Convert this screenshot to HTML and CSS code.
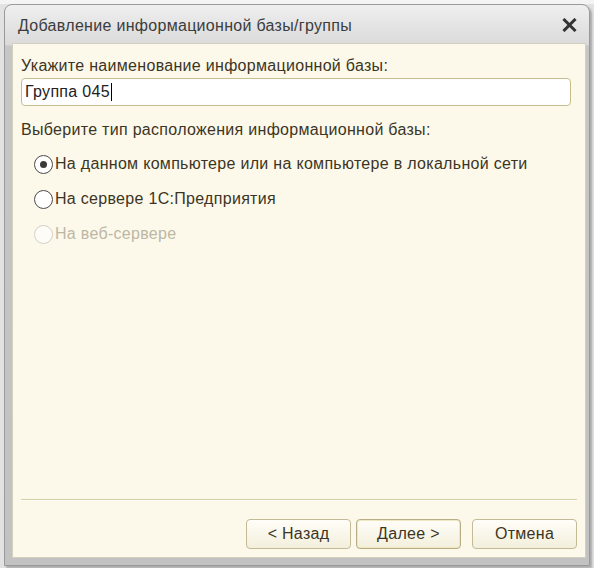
FILE: index.html
```html
<!DOCTYPE html>
<html lang="ru">
<head>
<meta charset="utf-8">
<title>Добавление информационной базы/группы</title>
<link rel="stylesheet" href="styles.css">
</head>
<body>
<div class="desk">
  <div class="window">
    <div class="titlebar">
      <span class="title">Добавление информационной базы/группы</span>
      <svg class="close" width="15" height="14" viewBox="0 0 15 14"><path d="M2.5 2 L12.5 12 M12.5 2 L2.5 12" stroke="#333" stroke-width="3" stroke-linecap="square"/></svg>
    </div>
    <div class="content">
      <div class="label first">Укажите наименование информационной базы:</div>
      <div class="input"><span>Группа 045</span><span class="caret"></span></div>
      <div class="label second">Выберите тип расположения информационной базы:</div>
      <div class="radios">
        <div class="radio checked"><span class="circle"><span class="dot"></span></span><span>На данном компьютере или на компьютере в локальной сети</span></div>
        <div class="radio"><span class="circle"></span><span>На сервере 1С:Предприятия</span></div>
        <div class="radio disabled"><span class="circle"></span><span>На веб-сервере</span></div>
      </div>
      <div class="spacer"></div>
      <div class="sep"></div>
      <div class="buttons">
        <button class="btn">&lt; Назад</button>
        <button class="btn default">Далее &gt;</button>
        <button class="btn cancel">Отмена</button>
      </div>
    </div>
  </div>
</div>
</body>
</html>
```
FILE: styles.css
```css
* { box-sizing: border-box; }
html, body { margin: 0; padding: 0; }
body {
  width: 594px;
  height: 568px;
  overflow: hidden;
  background: #dcdcdc;
  font-family: "Liberation Sans", Arial, sans-serif;
  font-size: 16px;
  letter-spacing: 0.3px;
  color: #3d3524;
}
.desk {
  padding: 4px 0 0 4px;
  height: 568px;
  background: linear-gradient(to bottom, #f4f4f4 0, #f4f4f4 4px, #e2e2e2 4px);
}
.window {
  width: 586px;
  height: 562px;
  border-radius: 8px 8px 0 0;
  background: linear-gradient(to bottom, #efefef 0, #dadada 40px, #c6c6c6 41px, #c2c2c2 100%);
  border: 1px solid #9a9a9a;
  padding: 0 3px 7px 7px;
  display: flex;
  flex-direction: column;
  box-shadow: 2px 2px 2px rgba(0,0,0,0.25);
}
.titlebar {
  height: 38px;
  display: flex;
  align-items: center;
  justify-content: space-between;
  padding: 3px 6px 0 6px;
}
.title {
  color: #3c3c3c;
}
.close { margin-right: 3px; margin-top: -2px; }
.content {
  flex: 1;
  background: #fcf9eb;
  border: 1px solid #d4d0c0;
  padding: 0 8px 8px 8px;
  display: flex;
  flex-direction: column;
}
.label { line-height: 18px; }
.label.first { margin-top: 13px; }
.input {
  margin-top: 3px;
  margin-right: 6px;
  height: 28px;
  background: #fff;
  border: 1px solid #c8bd8e;
  border-radius: 4px;
  display: flex;
  align-items: center;
  padding-left: 3px;
  color: #222;
}
.caret {
  display: inline-block;
  width: 1px;
  height: 18px;
  background: #000;
  margin-left: 1px;
}
.label.second { margin-top: 15px; }
.radios {
  margin-top: 15px;
  display: flex;
  flex-direction: column;
  gap: 15px;
  padding-left: 13px;
}
.radio {
  display: flex;
  align-items: center;
  height: 20px;
  gap: 2px;
}
.circle {
  width: 19px;
  height: 19px;
  border-radius: 50%;
  border: 1.5px solid #4a4a4a;
  background: #fff;
  display: flex;
  align-items: center;
  justify-content: center;
}
.dot {
  width: 7px;
  height: 7px;
  border-radius: 50%;
  background: #3a3a3a;
}
.radio.disabled { color: #bdb7a4; }
.radio.disabled .circle { border-color: #d2d0c8; background: #fdfcf6; }
.spacer { flex: 1; }
.sep {
  height: 2px;
  background: #d6cfa8;
  border-bottom: 1px solid #fffef6;
}
.buttons {
  margin-top: 18px;
  display: flex;
  justify-content: flex-end;
  gap: 5px;
}
.btn {
  width: 105px;
  height: 30px;
  border: 1px solid #c3bb98;
  border-radius: 4px;
  background: linear-gradient(to bottom, #fffef8, #f3efdc);
  font-family: "Liberation Sans", Arial, sans-serif;
  font-size: 16px;
  letter-spacing: 0.3px;
  color: #3d3524;
  padding: 0;
}
.btn.default {
  box-shadow: inset 0 0 0 1px #efe7c0;
  border-color: #b8ad84;
}
.btn.cancel { margin-left: 6px; }
```
